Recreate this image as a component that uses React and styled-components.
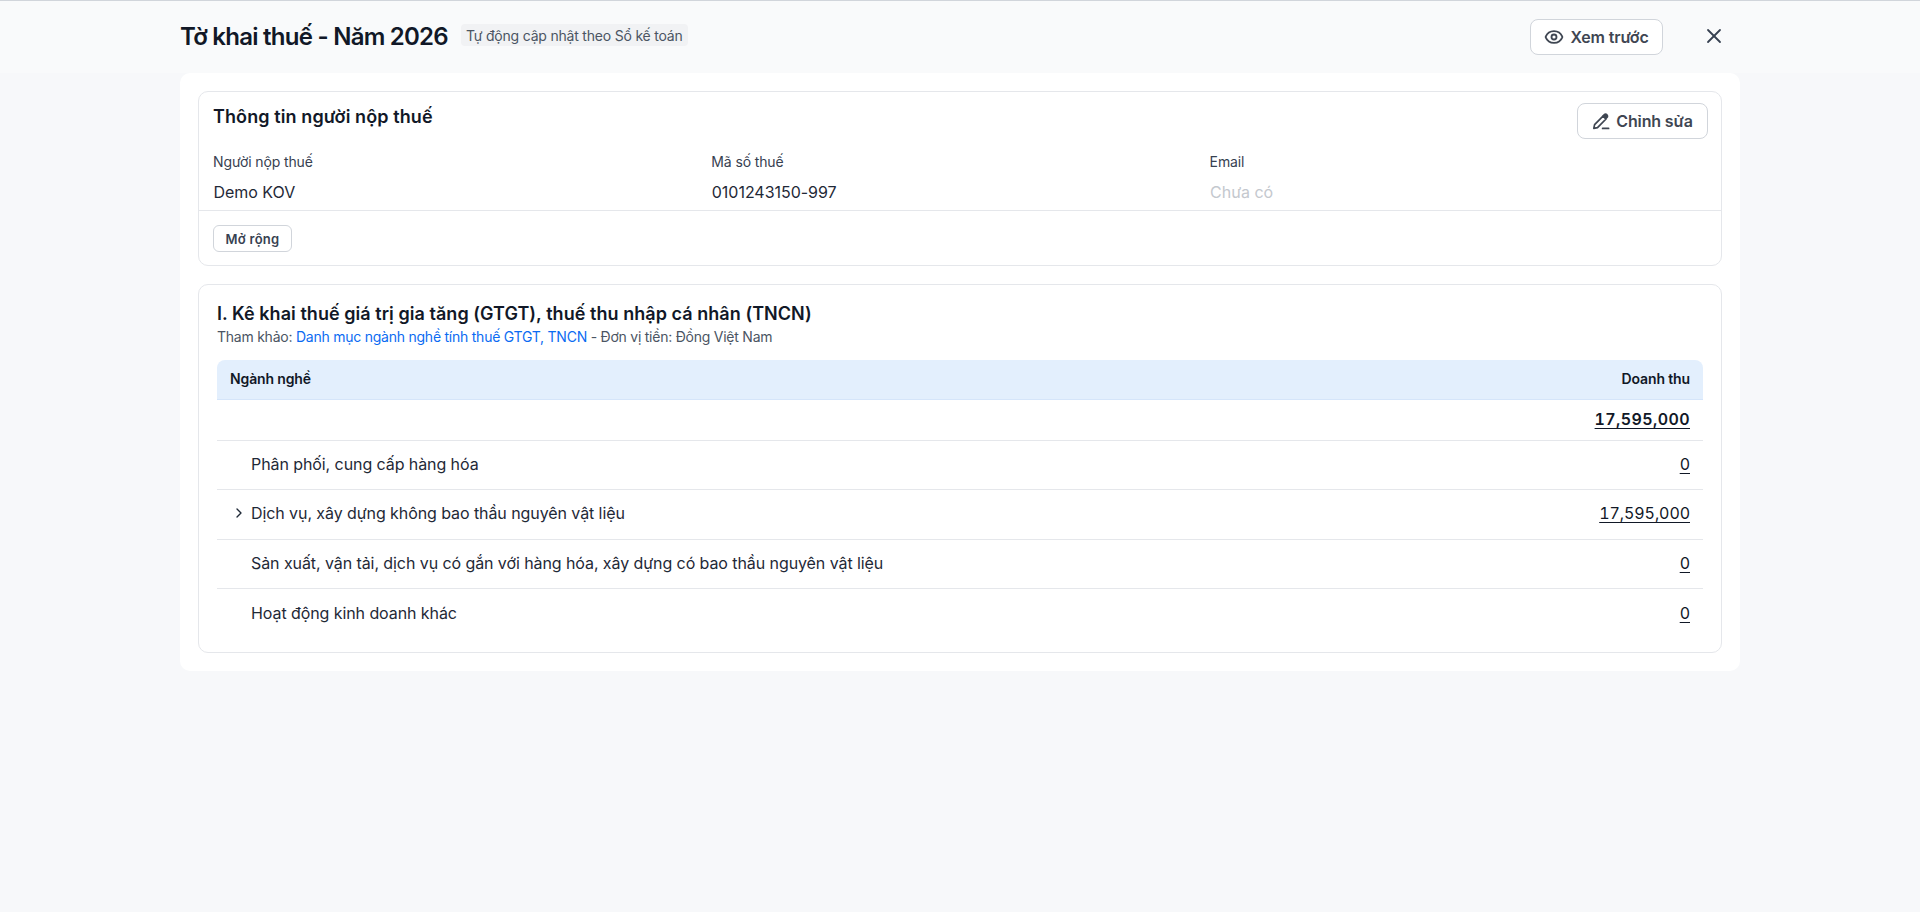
import React from "react";
import styled, { createGlobalStyle } from "styled-components";
import { Eye, X, ChevronRight } from "lucide-react";

const Global = createGlobalStyle`
  html, body { margin: 0; padding: 0; background: #f7f8fa; }
  body { font-family: Inter, "Noto Sans", sans-serif; color: #111827; }
  * { box-sizing: border-box; }
`;

const Page = styled.div`
  min-height: 912px;
  background: #f7f8fa;
  border-top: 1px solid #d1d5db;
`;
const Header = styled.header`
  height: 72px;
  padding: 0 180px;
  display: flex;
  align-items: center;
  background: #f9fafb;
`;
const Title = styled.h1`
  margin: 0;
  font-size: 24px;
  line-height: 32px;
  font-weight: 600;
  letter-spacing: -0.75px;
  color: #111827;
`;
const Tag = styled.span`
  margin: 0 0 4px 13px;
  padding: 0 5px;
  height: 22px;
  display: inline-flex;
  align-items: center;
  background: #f1f2f4;
  border-radius: 4px;
  font-size: 14px;
  letter-spacing: -0.2px;
  color: #4b5563;
`;
const Spacer = styled.div`
  flex: 1;
`;
const OutlineButton = styled.button`
  display: inline-flex;
  align-items: center;
  justify-content: center;
  gap: 6px;
  height: 36px;
  width: ${(p) => p.$width}px;
  background: #fff;
  border: 1px solid #d1d5db;
  border-radius: 8px;
  font: 600 16px Inter, sans-serif;
  letter-spacing: -0.15px;
  color: #3f4652;
  padding: 0 0 1px;
`;
const CloseButton = styled.button`
  width: 24px;
  height: 24px;
  margin: 0 14px 3px 39px;
  padding: 0;
  border: none;
  background: none;
  color: #374151;
  display: flex;
`;
const Panel = styled.main`
  margin: 0 180px;
  padding: 18px;
  background: #fff;
  border-radius: 10px;
  display: flex;
  flex-direction: column;
  gap: 18px;
`;
const Card = styled.section`
  border: 1px solid #e5e7eb;
  border-radius: 10px;
  background: #fff;
`;
const InfoTop = styled.div`
  display: flex;
  justify-content: space-between;
  padding: 11px 13px 0 14px;
  height: 60px;
`;
const InfoTitle = styled.h2`
  margin: 2px 0 0;
  font-size: 18px;
  line-height: 24px;
  font-weight: 600;
  letter-spacing: 0.1px;
  color: #111827;
`;
const Fields = styled.div`
  display: grid;
  grid-template-columns: repeat(3, 498.3px);
  padding: 0 14px;
  height: 59px;
  border-bottom: 1px solid #e5e7eb;
`;
const FieldLabel = styled.div`
  font-size: 14px;
  line-height: 20px;
  letter-spacing: -0.12px;
  color: #374151;
`;
const FieldValue = styled.div`
  margin: 8px 0 0 0.5px;
  font-size: 16px;
  line-height: 24px;
  letter-spacing: -0.03px;
  color: ${(p) => (p.$empty ? "#c4c8ce" : "#1f2937")};
`;
const InfoFoot = styled.div`
  padding: 14px 14px 13px;
  display: flex;
`;
const SmallButton = styled.button`
  height: 27px;
  width: 79px;
  padding: 0;
  background: #fff;
  border: 1px solid #d1d5db;
  border-radius: 6px;
  font: 600 13px Inter, sans-serif;
  letter-spacing: 0.25px;
  color: #374151;
`;
const TaxCard = styled(Card)`
  padding: 15px 18px 15px;
`;
const SectionTitle = styled.h2`
  margin: 0;
  font-size: 18px;
  line-height: 27px;
  font-weight: 600;
  letter-spacing: 0.05px;
  color: #111827;
`;
const Note = styled.p`
  margin: 0 0 13px;
  font-size: 14px;
  line-height: 20px;
  letter-spacing: -0.24px;
  color: #4b5563;
`;
const RefLink = styled.a`
  color: #0b6bf2;
`;
const HeadRow = styled.div`
  height: 40px;
  background: #e3effd;
  border-bottom: 1px solid #d5e5fa;
  border-radius: 8px 8px 0 0;
  display: flex;
  align-items: center;
  justify-content: space-between;
  padding: 0 13px 2px;
  font-size: 14px;
  font-weight: 600;
  letter-spacing: -0.13px;
  color: #111827;
`;
const Row = styled.div`
  height: ${(p) => p.$h}px;
  display: flex;
  align-items: center;
  padding: 0 13px ${(p) => (p.$last ? 1 : 3)}px 12px;
  border-bottom: ${(p) => (p.$last ? "none" : "1px solid #e5e7eb")};
  font-size: 16px;
  letter-spacing: -0.08px;
  color: #1f2937;
`;
const Caret = styled.span`
  width: 22px;
  padding: 0 0 1px 2px;
  display: flex;
  color: #1f2937;
`;
const Name = styled.span`
  flex: 1;
`;
const Amount = styled.a`
  text-decoration: underline;
  text-underline-offset: 3px;
  font-variant-numeric: tabular-nums;
  letter-spacing: ${(p) => (p.$bold ? "0.4px" : "-0.08px")};
  font-weight: ${(p) => (p.$bold ? 600 : 400)};
  color: #111827;
`;

const rows = [
  { name: "Phân phối, cung cấp hàng hóa", amount: "0", h: 49 },
  { name: "Dịch vụ, xây dựng không bao thầu nguyên vật liệu", amount: "17,595,000", h: 50, open: true },
  { name: "Sản xuất, vận tải, dịch vụ có gắn với hàng hóa, xây dựng có bao thầu nguyên vật liệu", amount: "0", h: 49 },
  { name: "Hoạt động kinh doanh khác", amount: "0", h: 48, last: true },
];

const PenIcon = () => (
  <svg width="18" height="18" viewBox="0 0 18 18" fill="none" stroke="currentColor" strokeWidth="1.7" strokeLinecap="round" strokeLinejoin="round">
    <path d="M1.8 16.4l.8-3.8 8.4-8.5 3 2.9-8.5 8.6-3.7.8z" />
    <path d="M11.2 3.9l1.2-1.2a1.6 1.6 0 0 1 2.3 0l.3.3a1.6 1.6 0 0 1 0 2.3l-1.2 1.2z" fill="currentColor" />
    <path d="M10.6 16.4h6" />
  </svg>
);

export default function App() {
  return (
    <Page>
      <Global />
      <Header>
        <Title>Tờ khai thuế - Năm 2026</Title>
        <Tag>Tự động cập nhật theo Sổ kế toán</Tag>
        <Spacer />
        <OutlineButton $width={133}>
          <Eye size={20} strokeWidth={2.2} />
          Xem trước
        </OutlineButton>
        <CloseButton>
          <X size={24} strokeWidth={1.8} />
        </CloseButton>
      </Header>
      <Panel>
        <Card>
          <InfoTop>
            <InfoTitle>Thông tin người nộp thuế</InfoTitle>
            <OutlineButton $width={131}>
              <PenIcon />
              Chỉnh sửa
            </OutlineButton>
          </InfoTop>
          <Fields>
            <div>
              <FieldLabel>Người nộp thuế</FieldLabel>
              <FieldValue>Demo KOV</FieldValue>
            </div>
            <div>
              <FieldLabel>Mã số thuế</FieldLabel>
              <FieldValue>0101243150-997</FieldValue>
            </div>
            <div>
              <FieldLabel>Email</FieldLabel>
              <FieldValue $empty>Chưa có</FieldValue>
            </div>
          </Fields>
          <InfoFoot>
            <SmallButton>Mở rộng</SmallButton>
          </InfoFoot>
        </Card>
        <TaxCard>
          <SectionTitle>I. Kê khai thuế giá trị gia tăng (GTGT), thuế thu nhập cá nhân (TNCN)</SectionTitle>
          <Note>
            Tham khảo: <RefLink>Danh mục ngành nghề tính thuế GTGT, TNCN</RefLink> - Đơn vị tiền: Đồng Việt Nam
          </Note>
          <HeadRow>
            <span>Ngành nghề</span>
            <span>Doanh thu</span>
          </HeadRow>
          <Row $h={41}>
            <Name />
            <Amount $bold>17,595,000</Amount>
          </Row>
          {rows.map((r) => (
            <Row key={r.name} $h={r.h} $last={r.last}>
              <Caret>{r.open && <ChevronRight size={16} />}</Caret>
              <Name>{r.name}</Name>
              <Amount>{r.amount}</Amount>
            </Row>
          ))}
        </TaxCard>
      </Panel>
    </Page>
  );
}
